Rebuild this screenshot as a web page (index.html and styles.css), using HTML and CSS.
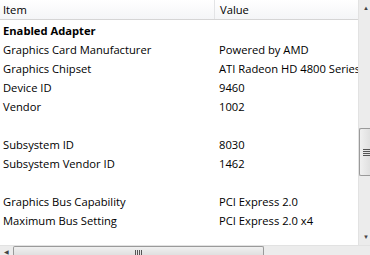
FILE: index.html
```html
<!DOCTYPE html>
<html lang="en">
<head>
  <meta charset="UTF-8" />
  <title>Adapter Properties</title>
  <link rel="stylesheet" href="styles.css">
</head>
<body>
  <div class="window">
    <div class="main">
      <div class="list">
        <div class="header">
          <div class="col-item">Item</div>
          <div class="col-value">Value</div>
        </div>
        <div class="row group"><div class="col-item">Enabled Adapter</div><div class="col-value"></div></div>
        <div class="row"><div class="col-item">Graphics Card Manufacturer</div><div class="col-value">Powered by AMD</div></div>
        <div class="row"><div class="col-item">Graphics Chipset</div><div class="col-value">ATI Radeon HD 4800 Series</div></div>
        <div class="row"><div class="col-item">Device ID</div><div class="col-value">9460</div></div>
        <div class="row"><div class="col-item">Vendor</div><div class="col-value">1002</div></div>
        <div class="row"><div class="col-item"></div><div class="col-value"></div></div>
        <div class="row"><div class="col-item">Subsystem ID</div><div class="col-value">8030</div></div>
        <div class="row"><div class="col-item">Subsystem Vendor ID</div><div class="col-value">1462</div></div>
        <div class="row"><div class="col-item"></div><div class="col-value"></div></div>
        <div class="row"><div class="col-item">Graphics Bus Capability</div><div class="col-value">PCI Express 2.0</div></div>
        <div class="row"><div class="col-item">Maximum Bus Setting</div><div class="col-value">PCI Express 2.0 x4</div></div>
      </div>
      <div class="vscroll">
        <div class="arrow">&#9650;</div>
        <div class="track">
          <div class="thumb"><div class="grip"></div></div>
        </div>
        <div class="arrow">&#9660;</div>
      </div>
    </div>
    <div class="hscroll">
      <div class="arrow">&#9664;</div>
      <div class="htrack">
        <div class="hthumb"><div class="hgrip"></div></div>
      </div>
    </div>
  </div>
</body>
</html>
```

FILE: styles.css
```css
html, body {
  margin: 0;
  padding: 0;
  background: #fff;
  font-family: "Open Sans", "Noto Sans", sans-serif;
  font-size: 11.2px;
  color: #000;
}

.window {
  width: 370px;
  height: 255px;
  display: flex;
  flex-direction: column;
  overflow: hidden;
}

.main {
  display: flex;
  flex: 1;
  min-height: 0;
}

.list {
  flex: 1;
  overflow: hidden;
  white-space: nowrap;
}

.header {
  display: flex;
  height: 19px;
  line-height: 19px;
  background: linear-gradient(#ffffff, #f4f5f7);
  border-bottom: 1px solid #d5d5d5;
  margin-bottom: 1px;
}

.header .col-item {
  border-right: 1px solid #e3e4e6;
}

.col-item {
  width: 211px;
  padding-left: 3px;
  flex: none;
}

.col-value {
  padding-left: 5px;
  flex: none;
}

.row {
  display: flex;
  height: 19px;
  line-height: 19px;
}

.group .col-item {
  font-weight: bold;
}

.vscroll {
  width: 11px;
  flex: none;
  display: flex;
  flex-direction: column;
  background: #ececec;
  border-left: 1px solid #e2e2e2;
}

.arrow {
  height: 16px;
  font-size: 6px;
  line-height: 16px;
  color: #444;
  text-align: center;
  padding-left: 3px;
}

.track {
  flex: 1;
  padding-top: 112px;
}

.thumb {
  height: 46px;
  border: 1px solid #9a9a9a;
  border-right: none;
  border-radius: 2px 0 0 2px;
  background: linear-gradient(90deg, #f0f0f0, #e0e0e0);
  display: flex;
  align-items: center;
  padding-left: 3px;
}

.grip {
  width: 8px;
  height: 7px;
  background: repeating-linear-gradient(#555 0 1px, transparent 1px 2px);
}

.hscroll {
  height: 9px;
  display: flex;
  background: #ececec;
  border-top: 1px solid #e2e2e2;
}

.hscroll .arrow {
  width: 13px;
  height: 9px;
  line-height: 12px;
  padding-left: 0;
}

.htrack {
  flex: 1;
}

.hthumb {
  width: 251px;
  height: 9px;
  border: 1px solid #9a9a9a;
  border-bottom: none;
  border-radius: 2px 2px 0 0;
  background: linear-gradient(#f0f0f0, #e0e0e0);
  display: flex;
  justify-content: center;
  padding-top: 3px;
  box-sizing: border-box;
}

.hgrip {
  width: 7px;
  height: 6px;
  background: repeating-linear-gradient(90deg, #555 0 1px, transparent 1px 2px);
}
```
